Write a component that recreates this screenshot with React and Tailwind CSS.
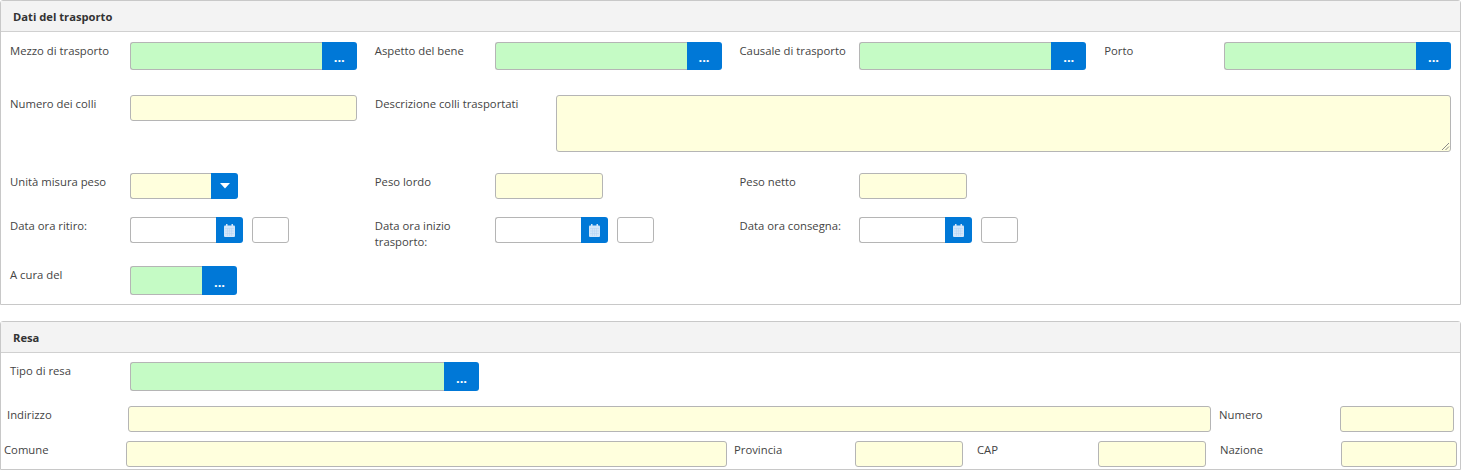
import React from "react";

const inputBase = "h-full border border-[#b5b5b5] rounded-[3px]";

function Label({ children, className = "w-[120px]" }) {
  return (
    <label className={"shrink-0 text-[11.3px] leading-[16px] pt-[1px] text-[#444] " + className}>
      {children}
    </label>
  );
}

function Dots() {
  return (
    <span className="text-white font-bold text-[13px] leading-none pt-[3px]">...</span>
  );
}

function Lookup({ width = "w-full", btn = "w-[35px]", height = "h-[28px]" }) {
  return (
    <div className={"flex " + width + " " + height}>
      <div className="flex-1 h-full bg-[#c5fbc5] border border-[#b5b5b5] border-r-0 rounded-l-[3px]"></div>
      <button className={"h-full flex items-center justify-center bg-[#0078d7] rounded-r-[3px] " + btn}>
        <Dots />
      </button>
    </div>
  );
}

function TextBox({ className = "w-full", bg = "bg-[#ffffdd]" }) {
  return <div className={inputBase + " " + bg + " " + className}></div>;
}

function DateTime() {
  return (
    <div className="flex h-[26px]">
      <div className="w-[86px] h-full bg-white border border-[#b5b5b5] border-r-0 rounded-l-[3px]"></div>
      <button className="w-[27px] h-full flex items-center justify-center bg-[#0078d7] rounded-r-[3px]">
        <svg width="11" height="13" viewBox="0 0 11 13">
          <rect x="0" y="1.5" width="11" height="11.5" rx="1" fill="#d3e6fa" />
          <rect x="2" y="0" width="1.5" height="3" fill="#d3e6fa" />
          <rect x="7.5" y="0" width="1.5" height="3" fill="#d3e6fa" />
          <path d="M1 4.5 H10 M1 7 H10 M1 9.5 H10 M3.5 4.5 V12 M5.5 4.5 V12 M7.5 4.5 V12" stroke="#b4d2f2" strokeWidth="0.5" fill="none" />
        </svg>
      </button>
      <div className="w-[37px] h-full ml-[9px] bg-white border border-[#b5b5b5] rounded-[3px]"></div>
    </div>
  );
}

function Panel({ title, children, className = "" }) {
  return (
    <section className={"border border-[#c8c8c8] rounded-t-[3px] " + className}>
      <div className="h-[31px] flex items-center px-[12px] pt-[2px] bg-[#f3f3f3] border-b border-[#d0d0d0] text-[11.2px] font-bold text-[#333]">
        {title}
      </div>
      {children}
    </section>
  );
}

const rowClass = "grid grid-cols-4 gap-x-[18px] px-[9px]";

export default function App() {
  return (
    <div className="w-[1461px] h-[470px] overflow-hidden bg-white font-['Open_Sans',sans-serif]">
      <Panel title="Dati del trasporto" className="h-[305px]">
        <div className={rowClass + " mt-[10px]"}>
          <div className="flex"><Label>Mezzo di trasporto</Label><div className="flex-1"><Lookup /></div></div>
          <div className="flex"><Label>Aspetto del bene</Label><div className="flex-1"><Lookup /></div></div>
          <div className="flex"><Label className="w-[119px]">Causale di trasporto</Label><div className="flex-1"><Lookup /></div></div>
          <div className="flex"><Label>Porto</Label><div className="flex-1"><Lookup /></div></div>
        </div>

        <div className="flex px-[9px] mt-[25px] h-[57px]">
          <Label>Numero dei colli</Label>
          <div className="w-[227px] h-[26px]"><TextBox /></div>
          <Label className="w-[181px] ml-[18px]">Descrizione colli trasportati</Label>
          <div className="relative flex-1 h-full">
            <TextBox />
            <svg className="absolute right-[1px] bottom-[1px]" width="9" height="9" viewBox="0 0 9 9">
              <path d="M1 8 L8 1 M4.5 8 L8 4.5" stroke="#8a8a8a" strokeWidth="1" fill="none" />
            </svg>
          </div>
        </div>

        <div className={rowClass + " mt-[21px]"}>
          <div className="flex">
            <Label>Unità misura peso</Label>
            <div className="flex h-[26px]">
              <div className="w-[81px] h-full bg-[#ffffdd] border border-[#b5b5b5] border-r-0 rounded-l-[3px]"></div>
              <button className="w-[27px] h-full flex items-center justify-center bg-[#0078d7] rounded-r-[3px]">
                <svg width="10" height="6" viewBox="0 0 10 6"><path d="M0 0 H10 L5 5.5 Z" fill="white" /></svg>
              </button>
            </div>
          </div>
          <div className="flex"><Label>Peso lordo</Label><div className="w-[108px] h-[26px]"><TextBox /></div></div>
          <div className="flex"><Label className="w-[119px]">Peso netto</Label><div className="w-[108px] h-[26px]"><TextBox /></div></div>
        </div>

        <div className={rowClass + " mt-[18px]"}>
          <div className="flex"><Label>Data ora ritiro:</Label><DateTime /></div>
          <div className="flex"><Label>Data ora inizio trasporto:</Label><DateTime /></div>
          <div className="flex"><Label className="w-[119px]">Data ora consegna:</Label><DateTime /></div>
        </div>

        <div className="flex px-[9px] mt-[16px]">
          <Label>A cura del</Label>
          <Lookup width="w-[107px]" height="h-[29px]" />
        </div>
      </Panel>

      <Panel title="Resa" className="mt-[16px] h-[149px] relative">
        <div className="flex px-[9px] mt-[9px]">
          <Label>Tipo di resa</Label>
          <Lookup width="w-[349px]" height="h-[29px]" />
        </div>

        <div className="flex h-[26px] mt-[15px] pl-[6px]">
          <Label className="w-[121px]">Indirizzo</Label>
          <TextBox className="w-[1083px]" />
          <Label className="w-[121px] ml-[8px]">Numero</Label>
          <TextBox className="w-[114px]" />
        </div>

        <div className="flex h-[26px] mt-[9px] pl-[3px]">
          <Label className="w-[122px]">Comune</Label>
          <TextBox className="w-[601px]" />
          <Label className="w-[121px] ml-[7px]">Provincia</Label>
          <TextBox className="w-[108px]" />
          <Label className="w-[121px] ml-[14px]">CAP</Label>
          <TextBox className="w-[108px]" />
          <Label className="w-[121px] ml-[14px]">Nazione</Label>
          <TextBox className="w-[116px]" />
        </div>
      </Panel>
    </div>
  );
}
